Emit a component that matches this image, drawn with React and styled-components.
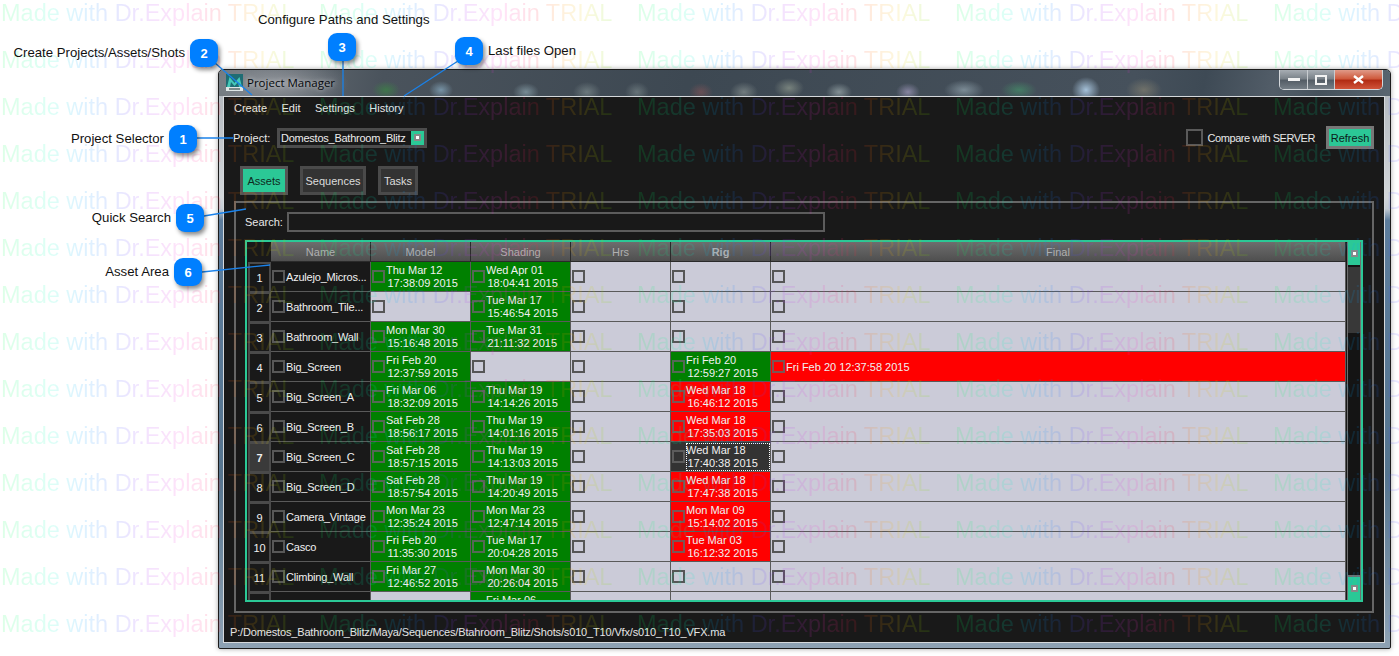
import React from "react";
import styled, { createGlobalStyle } from "styled-components";

const Global = createGlobalStyle`
  html, body { margin: 0; padding: 0; background: #fff; }
  #root { width: 1399px; height: 656px; }
`;

const UI_FONT = `"Liberation Sans", Arial, sans-serif`;
const TEAL = "#2bc896";

const Page = styled.div`
  position: relative;
  width: 1399px;
  height: 656px;
  overflow: hidden;
  background: #fff;
  padding: 69px 0 0 218px;
  box-sizing: border-box;
  font-family: ${UI_FONT};
`;

const Win = styled.div`
  width: 1173px;
  height: 580px;
  box-sizing: border-box;
  border: 1px solid #1c1c1c;
  border-radius: 5px 5px 2px 2px;
  padding: 0 5px 5px 4px;
  display: flex;
  flex-direction: column;
  box-shadow: 0 0 5px rgba(0, 0, 0, 0.35);
  background: linear-gradient(180deg, #aeb4ba 0, #d2d6da 22%, #c4ccd4 24%, #5d7d9d 26%, #56758f 70%, #8ea2b4 100%);
`;

const TitleBar = styled.div`
  height: 26px;
  margin: 0 -5px 0 -4px;
  padding-left: 7px;
  display: flex;
  align-items: flex-start;
  justify-content: space-between;
  border-radius: 4px 4px 0 0;
  background:
    radial-gradient(ellipse 14px 9px at 167px 20px, rgba(60, 130, 70, 0.75), transparent),
    radial-gradient(ellipse 12px 9px at 222px 20px, rgba(150, 190, 215, 0.6), transparent),
    radial-gradient(ellipse 13px 9px at 307px 22px, rgba(170, 200, 210, 0.5), transparent),
    radial-gradient(ellipse 14px 10px at 368px 22px, rgba(150, 165, 165, 0.5), transparent),
    radial-gradient(ellipse 12px 10px at 418px 22px, rgba(150, 165, 165, 0.45), transparent),
    radial-gradient(ellipse 12px 9px at 482px 22px, rgba(170, 90, 90, 0.4), transparent),
    radial-gradient(ellipse 14px 10px at 525px 22px, rgba(165, 175, 170, 0.5), transparent),
    radial-gradient(ellipse 15px 10px at 570px 18px, rgba(175, 185, 165, 0.5), transparent),
    radial-gradient(ellipse 13px 9px at 620px 22px, rgba(185, 200, 200, 0.55), transparent),
    radial-gradient(ellipse 12px 9px at 689px 22px, rgba(180, 170, 210, 0.6), transparent),
    radial-gradient(ellipse 20px 10px at 745px 20px, rgba(170, 190, 200, 0.55), transparent),
    radial-gradient(ellipse 18px 9px at 800px 20px, rgba(70, 160, 110, 0.55), transparent),
    radial-gradient(ellipse 14px 13px at 867px 20px, rgba(175, 205, 230, 0.9), transparent),
    radial-gradient(ellipse 18px 12px at 925px 20px, rgba(140, 135, 115, 0.6), transparent),
    radial-gradient(ellipse 70px 26px at 60px 14px, rgba(190, 190, 195, 0.5), transparent),
    linear-gradient(100deg, #737a80 0, #4a535c 14%, #3d4852 40%, #46515c 78%, #3e4a55 84%, #525d68 90%, #46525c 94%, #596570 100%);
`;

const TitleLeft = styled.div`
  display: flex;
  align-items: center;
  gap: 4px;
  height: 25px;
  font-family: "Open Sans", "Noto Sans", sans-serif;
  font-size: 11.5px;
  color: #05080b;
  text-shadow: 0 0 5px rgba(255, 255, 255, 0.75);
`;

const WinButtons = styled.div`
  display: flex;
  height: 19px;
  margin-right: 7px;
  border: 1px solid #d4d8dc;
  border-top: 0;
  border-radius: 0 0 5px 5px;
  overflow: hidden;
`;

const WinButton = styled.div`
  width: ${(p) => p.$w}px;
  display: flex;
  align-items: center;
  justify-content: center;
  box-sizing: border-box;
  border-right: ${(p) => (p.$close ? "0" : "1px solid #c8ccd0")};
  background: ${(p) =>
    p.$close
      ? "linear-gradient(180deg, #e09a88 0, #cf5b3e 45%, #b22c14 55%, #d0543a 100%)"
      : "linear-gradient(180deg, #a7adb3 0, #7b838a 45%, #545d66 55%, #757e86 100%)"};
`;

const Inner = styled.div`
  flex: 1;
  min-height: 0;
  display: flex;
  flex-direction: column;
  background: #191919;
  border: 1px solid #d6d9dc;
  color: #ececec;
  font-size: 11px;
`;

const MenuBar = styled.div`
  height: 22px;
  display: flex;
  align-items: center;
  padding-left: 10px;
  gap: 14.5px;
`;

const MenuItem = styled.span`
  color: #e8e8e8;
`;

const TopRow = styled.div`
  height: 23px;
  margin-top: 7px;
  padding: 0 10px 0 9px;
  display: flex;
  align-items: center;
`;

const Label = styled.span`
  color: #e8e8e8;
  white-space: nowrap;
  ${(p) => (p.$w ? `width: ${p.$w}px;` : "")}
`;

const CompareLabel = styled(Label)`
  letter-spacing: -0.45px;
`;

const Combo = styled.div`
  margin-left: 5px;
  width: 150px;
  height: 20px;
  box-sizing: border-box;
  border: 3px solid #4c4c4c;
  display: flex;
  align-items: center;
  justify-content: space-between;
  padding-left: 1px;
  background: #191919;
  white-space: nowrap;
  letter-spacing: -0.25px;
`;

const ComboArrow = styled.span`
  width: 13px;
  height: 14px;
  background: ${TEAL};
  display: flex;
  align-items: center;
  justify-content: center;
`;

const Dot = styled.span`
  width: 7px;
  height: 7px;
  box-sizing: border-box;
  background: #fff;
  border: 2px solid #888;
  outline: 0;
`;

const RightTools = styled.div`
  margin-left: auto;
  display: flex;
  align-items: center;
`;

const BigCheck = styled.span`
  width: 17px;
  height: 17px;
  box-sizing: border-box;
  border: 2px solid #5a5a5a;
  margin-right: 5px;
`;

const RefreshButton = styled.div`
  margin-left: 11px;
  width: 48px;
  height: 23px;
  box-sizing: border-box;
  border: 3px solid #777;
  background: ${TEAL};
  color: #0b2019;
  display: flex;
  align-items: center;
  justify-content: center;
`;

const Tabs = styled.div`
  margin: 17px 0 0 16px;
  display: flex;
  gap: 12px;
`;

const Tab = styled.div`
  height: 29px;
  width: ${(p) => p.$w}px;
  box-sizing: border-box;
  border: 3px solid ${(p) => (p.$active ? "#555" : "#4a4a4a")};
  background: ${(p) => (p.$active ? TEAL : "#333")};
  color: ${(p) => (p.$active ? "#0e2a21" : "#dcdcdc")};
  display: flex;
  align-items: center;
  justify-content: center;
`;

const Group = styled.div`
  margin: 6px 0 0 10px;
  width: 1140px;
  height: 412px;
  box-sizing: border-box;
  border: 2px solid #666;
  padding: 9px 0 0 9px;
`;

const SearchRow = styled.div`
  display: flex;
  align-items: center;
  height: 20px;
`;

const SearchInput = styled.div`
  margin-left: 6px;
  width: 538px;
  height: 20px;
  box-sizing: border-box;
  border: 2px solid #5c5c5c;
`;

const TableFrame = styled.div`
  margin-top: 8px;
  width: 1118px;
  height: 362px;
  box-sizing: border-box;
  border: 2px solid ${TEAL};
  padding-left: 1px;
  display: flex;
  overflow: hidden;
`;

const TableMain = styled.div`
  flex: 1;
  min-width: 0;
  display: flex;
  flex-direction: column;
  overflow: hidden;
`;

const Columns = styled.div`
  display: grid;
  grid-template-columns: 23px 100px 100px 100px 100px 100px 575px;
`;

const HeadCell = styled.div`
  height: 20px;
  box-sizing: border-box;
  display: flex;
  align-items: center;
  justify-content: center;
  border-right: 1px solid #2a2a2a;
  border-bottom: 1px solid #2a2a2a;
  font-weight: ${(p) => (p.$bold ? 700 : 400)};
  color: #b0b0b0;
  background: linear-gradient(180deg, #6d6d6d 0, #4f4f4f 100%);
`;

const Corner = styled.div`
  background: #191919;
`;

const RowHead = styled.div`
  height: 30px;
  box-sizing: border-box;
  border: 2px solid #4a4a4a;
  border-bottom-width: 1px;
  display: flex;
  align-items: center;
  justify-content: center;
  padding-top: 1px;
  background: ${(p) => (p.$active ? "#3a3a3a" : "#191919")};
  color: #f0f0f0;
  font-weight: ${(p) => (p.$active ? 700 : 400)};
`;

const cellBg = { green: "#008000", red: "#ff0000", empty: "#cbcbd8", name: "#191919", sel: "#333" };

const Cell = styled.div`
  height: 30px;
  box-sizing: border-box;
  position: relative;
  display: flex;
  align-items: center;
  padding-left: 1px;
  border-right: 1px solid #5a5a5a;
  border-bottom: 1px solid #5a5a5a;
  background: ${(p) => cellBg[p.$kind]};
  color: #f1f1f1;
  min-width: 0;
  overflow: hidden;
`;

const Check = styled.span`
  flex: none;
  width: 13px;
  height: 13px;
  box-sizing: border-box;
  border: 2px solid ${(p) => (p.$soft ? "rgba(100,100,100,.85)" : "#565656")};
  margin-top: -1px;
`;

const NameText = styled.span`
  margin-left: 1px;
  white-space: nowrap;
  letter-spacing: -0.2px;
`;

const DateText = styled.div`
  flex: 1;
  line-height: 13px;
  white-space: nowrap;
  margin-left: 1px;
`;

const DateTime = styled.div`
  padding-left: 1.5px;
`;

const SelectedDate = styled(DateText)`
  outline: 1px dotted #fff;
  outline-offset: -1px;
  height: 28px;
  padding-top: 1px;
  box-sizing: border-box;
`;

const WideDate = styled.span`
  margin-left: 1px;
  white-space: nowrap;
`;

const Scroll = styled.div`
  width: 14px;
  flex: none;
  box-sizing: border-box;
  background: #141414;
  border: 2px solid #6e6e6e;
  border-width: 0 1px;
  display: flex;
  flex-direction: column;
`;

const ScrollBtn = styled.div`
  height: 23px;
  flex: none;
  background: ${TEAL};
  border-top: ${(p) => (p.$bottom ? "2px solid #6e6e6e" : "0")};
  display: flex;
  align-items: center;
  justify-content: center;
`;

const ScrollThumb = styled.div`
  height: 66px;
  flex: none;
  margin-top: 2px;
  background: #383838;
`;

const ScrollGap = styled.div`
  flex: 1;
`;

const Status = styled.div`
  flex: 1;
  display: flex;
  align-items: center;
  padding: 9px 0 0 6px;
  color: #e6e6e6;
  white-space: nowrap;
  letter-spacing: -0.155px;
`;

/* ---- trial watermark ---- */
const Water = styled.div`
  position: absolute;
  left: 1px;
  top: -10px;
  display: grid;
  grid-template-columns: repeat(5, 318px);
  grid-auto-rows: 47px;
  pointer-events: none;
  opacity: 0.13;
`;

const WaterText = styled.span`
  font-family: "Liberation Sans", Arial, sans-serif;
  font-size: 23.5px;
  line-height: 47px;
  white-space: nowrap;
  justify-self: start;
  color: transparent;
  background: linear-gradient(
    90deg,
    #00ff50 0,
    #00ffc0 17%,
    #00b0ff 26%,
    #3060ff 38%,
    #a030ff 48%,
    #ff30d0 62%,
    #ff2040 74%,
    #ff8000 81%,
    #f0d000 90%,
    #70e000 100%
  );
  -webkit-background-clip: text;
  background-clip: text;
`;

/* ---- annotations ---- */
const Lines = styled.svg`
  position: absolute;
  inset: 0;
  pointer-events: none;
`;

const Bubble = styled.div`
  position: absolute;
  left: ${(p) => p.$x}px;
  top: ${(p) => p.$y}px;
  width: 28px;
  height: 28px;
  border-radius: 9px;
  background: #007fff;
  color: #fff;
  font-family: "Liberation Sans", Arial, sans-serif;
  font-weight: 700;
  font-size: 13px;
  display: flex;
  align-items: center;
  justify-content: center;
  box-shadow: 2px 3px 4px rgba(0, 0, 0, 0.45);
`;

const Note = styled.div`
  position: absolute;
  left: ${(p) => p.$x}px;
  top: ${(p) => p.$y}px;
  width: ${(p) => p.$w}px;
  text-align: ${(p) => p.$align || "right"};
  font-family: "Liberation Sans", Arial, sans-serif;
  font-size: 13.2px;
  line-height: 16px;
  color: #111;
  white-space: nowrap;
`;

const MayaIcon = () => (
  <svg width="17" height="17" viewBox="0 0 17 17">
    <rect width="17" height="17" fill="#dfe6e6" />
    <rect y="0" width="17" height="13" fill="#1f6d74" />
    <path d="M1 13 L3.5 3 L8.5 9 L13.5 3 L16 13 L13 13 L12 8 L8.5 12 L5 8 L4 13 Z" fill="#45c9b8" />
    <rect x="3" y="14" width="11" height="2" fill="#7a8a8a" />
  </svg>
);

const d = (a, b) => [a, b];
const rows = [
  ["Azulejo_Micros...", d("Thu Mar 12", "17:38:09 2015"), d("Wed Apr 01", "18:04:41 2015")],
  ["Bathroom_Tile...", null, d("Tue Mar 17", "15:46:54 2015")],
  ["Bathroom_Wall", d("Mon Mar 30", "15:16:48 2015"), d("Tue Mar 31", "21:11:32 2015")],
  ["Big_Screen", d("Fri Feb 20", "12:37:59 2015"), null, d("Fri Feb 20", "12:59:27 2015"), "green", "Fri Feb 20 12:37:58 2015"],
  ["Big_Screen_A", d("Fri Mar 06", "18:32:09 2015"), d("Thu Mar 19", "14:14:26 2015"), d("Wed Mar 18", "16:46:12 2015"), "red"],
  ["Big_Screen_B", d("Sat Feb 28", "18:56:17 2015"), d("Thu Mar 19", "14:01:16 2015"), d("Wed Mar 18", "17:35:03 2015"), "red"],
  ["Big_Screen_C", d("Sat Feb 28", "18:57:15 2015"), d("Thu Mar 19", "14:13:03 2015"), d("Wed Mar 18", "17:40:38 2015"), "sel"],
  ["Big_Screen_D", d("Sat Feb 28", "18:57:54 2015"), d("Thu Mar 19", "14:20:49 2015"), d("Wed Mar 18", "17:47:38 2015"), "red"],
  ["Camera_Vintage", d("Mon Mar 23", "12:35:24 2015"), d("Mon Mar 23", "12:47:14 2015"), d("Mon Mar 09", "15:14:02 2015"), "red"],
  ["Casco", d("Fri Feb 20", "11:35:30 2015"), d("Tue Mar 17", "20:04:28 2015"), d("Tue Mar 03", "16:12:32 2015"), "red"],
  ["Climbing_Wall", d("Fri Mar 27", "12:46:52 2015"), d("Mon Mar 30", "20:26:04 2015")],
  ["", null, d("Fri Mar 06", "")],
];

const DateCell = ({ value, kind }) => {
  if (!value) return <Cell $kind="empty"><Check /></Cell>;
  const Body = kind === "sel" ? SelectedDate : DateText;
  return (
    <Cell $kind={kind}>
      <Check $soft />
      <Body>
        <div>{value[0]}</div>
        <DateTime>{value[1] || "\u00a0"}</DateTime>
      </Body>
    </Cell>
  );
};

const callouts = [
  { n: 1, x: 169, y: 125 },
  { n: 2, x: 190, y: 39 },
  { n: 3, x: 328, y: 33 },
  { n: 4, x: 455, y: 37 },
  { n: 5, x: 176, y: 204 },
  { n: 6, x: 174, y: 258 },
];

const notes = [
  { t: "Project Selector", x: 24, y: 131, w: 140 },
  { t: "Create Projects/Assets/Shots", x: 5, y: 45, w: 180 },
  { t: "Configure Paths and Settings", x: 258, y: 12, w: 180, align: "left" },
  { t: "Last files Open", x: 488, y: 43, w: 120, align: "left" },
  { t: "Quick Search", x: 31, y: 210, w: 140 },
  { t: "Asset Area", x: 29, y: 264, w: 140 },
];

export default function App() {
  return (
    <Page>
      <Global />
      <Win>
        <TitleBar>
          <TitleLeft><MayaIcon />Project Manager</TitleLeft>
          <WinButtons>
            <WinButton $w={28}>
              <svg width="12" height="5"><rect y="1" width="12" height="3" fill="#f2f2f2" /></svg>
            </WinButton>
            <WinButton $w={27}>
              <svg width="12" height="10"><rect x="1" y="1" width="10" height="8" fill="none" stroke="#f2f2f2" strokeWidth="2" /></svg>
            </WinButton>
            <WinButton $w={47} $close>
              <svg width="11" height="9"><path d="M1 1 L10 8 M10 1 L1 8" stroke="#fff" strokeWidth="2.4" /></svg>
            </WinButton>
          </WinButtons>
        </TitleBar>
        <Inner>
          <MenuBar>
            <MenuItem>Create</MenuItem>
            <MenuItem>Edit</MenuItem>
            <MenuItem>Settings</MenuItem>
            <MenuItem>History</MenuItem>
          </MenuBar>
          <TopRow>
            <Label $w={39}>Project:</Label>
            <Combo>
              Domestos_Bathroom_Blitz
              <ComboArrow><Dot /></ComboArrow>
            </Combo>
            <RightTools>
              <BigCheck />
              <CompareLabel>Compare with SERVER</CompareLabel>
              <RefreshButton>Refresh</RefreshButton>
            </RightTools>
          </TopRow>
          <Tabs>
            <Tab $w={48} $active>Assets</Tab>
            <Tab $w={66}>Sequences</Tab>
            <Tab $w={40}>Tasks</Tab>
          </Tabs>
          <Group>
            <SearchRow>
              <Label $w={36}>Search:</Label>
              <SearchInput />
            </SearchRow>
            <TableFrame>
              <TableMain>
                <Columns>
                  <Corner />
                  <HeadCell>Name</HeadCell>
                  <HeadCell>Model</HeadCell>
                  <HeadCell>Shading</HeadCell>
                  <HeadCell>Hrs</HeadCell>
                  <HeadCell $bold>Rig</HeadCell>
                  <HeadCell>Final</HeadCell>
                </Columns>
                {rows.map((r, i) => (
                  <Columns key={i}>
                    <RowHead $active={i === 6}>{i + 1}</RowHead>
                    <Cell $kind="name">
                      <Check $soft />
                      <NameText>{r[0]}</NameText>
                    </Cell>
                    <DateCell value={r[1]} kind="green" />
                    <DateCell value={r[2]} kind="green" />
                    <DateCell value={null} />
                    <DateCell value={r[3]} kind={r[4]} />
                    {r[5] ? (
                      <Cell $kind="red">
                        <Check $soft />
                        <WideDate>{r[5]}</WideDate>
                      </Cell>
                    ) : (
                      <Cell $kind="empty"><Check /></Cell>
                    )}
                  </Columns>
                ))}
              </TableMain>
              <Scroll>
                <ScrollBtn><Dot /></ScrollBtn>
                <ScrollThumb />
                <ScrollGap />
                <ScrollBtn $bottom><Dot /></ScrollBtn>
              </Scroll>
            </TableFrame>
          </Group>
          <Status>P:/Domestos_Bathroom_Blitz/Maya/Sequences/Btahroom_Blitz/Shots/s010_T10/Vfx/s010_T10_VFX.ma</Status>
        </Inner>
      </Win>

      <Water aria-hidden="true">
        {Array.from({ length: 70 }, (_, i) => (
          <WaterText key={i}>Made with Dr.Explain TRIAL</WaterText>
        ))}
      </Water>

      <Lines width="1399" height="656" viewBox="0 0 1399 656">
        <g stroke="#1a82ea" strokeWidth="1.3" fill="none">
          <path d="M197 138 L233 138" />
          <path d="M215 63 L252 95" />
          <path d="M343 61 L343 96" />
          <path d="M458 61 L404 96" />
          <path d="M204 216 L246 209" />
          <path d="M202 272 L270 265" />
        </g>
      </Lines>
      {notes.map((n) => (
        <Note key={n.t} $x={n.x} $y={n.y} $w={n.w} $align={n.align}>{n.t}</Note>
      ))}
      {callouts.map((c) => (
        <Bubble key={c.n} $x={c.x} $y={c.y}>{c.n}</Bubble>
      ))}
    </Page>
  );
}
